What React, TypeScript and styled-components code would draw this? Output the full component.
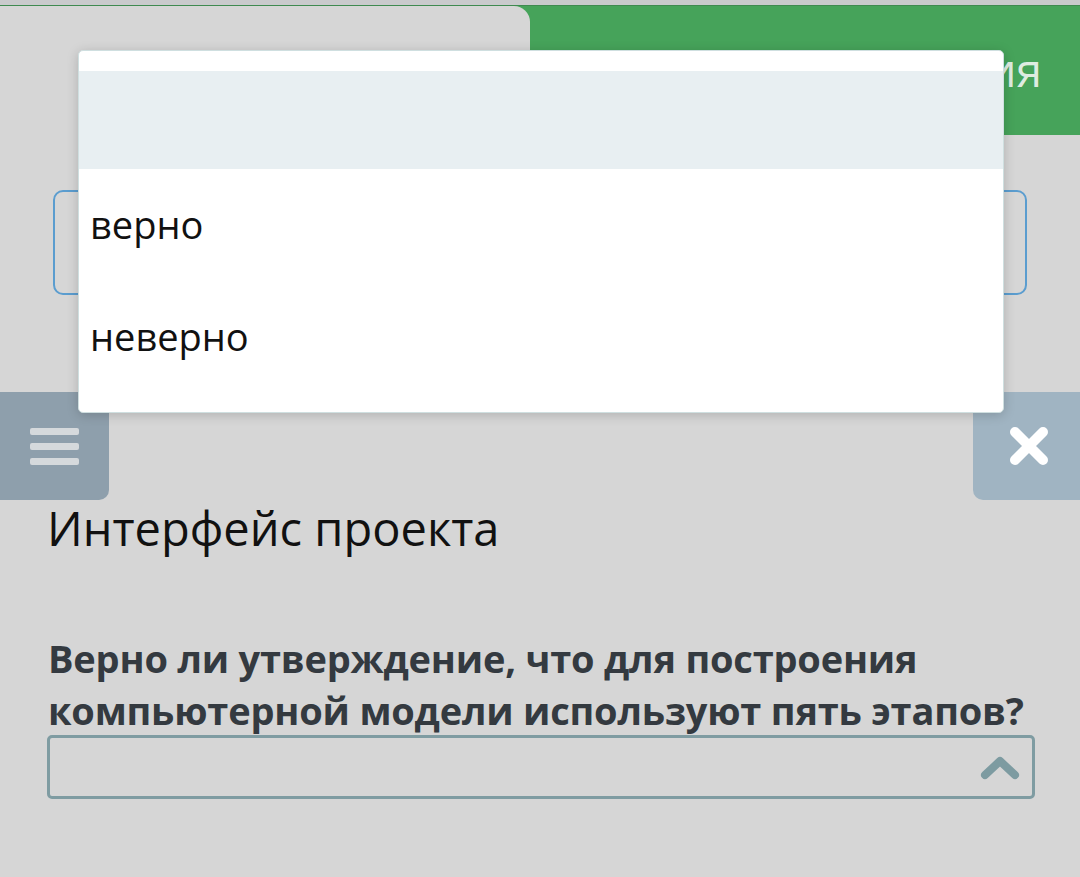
import React from "react";
import styled, { createGlobalStyle } from "styled-components";

const GlobalStyle = createGlobalStyle`
    body {
        margin: 0;
        background: #d6d6d6;
        font-family: "Open Sans", "Noto Sans", sans-serif;
    }
`;

const Page = styled.div`
    position: relative;
    width: 1080px;
    height: 877px;
    overflow: hidden;
    background: #d6d6d6;
`;

const TopStrip = styled.div`
    height: 5px;
    background: #c9cacc;
    border-bottom: 1px solid #3f8a50;
`;

const Header = styled.div`
    display: flex;
    height: 129px;
    background: linear-gradient(to right, transparent 510px, #46a35a 510px);
`;

const Tab = styled.div`
    width: 530px;
    background: #d6d6d6;
    border-top-right-radius: 16px;
`;

const GreenLabel = styled.div`
    flex: 1;
    display: flex;
    align-items: center;
    justify-content: flex-end;
    padding: 0 38px 4px 0;
    color: rgba(238, 244, 239, 0.92);
    font-size: 46px;
    white-space: nowrap;
`;

const InputRow = styled.div`
    padding: 55px 53px 0 53px;
`;

const TextInput = styled.div`
    height: 101px;
    border: 2px solid #5b9dcf;
    border-radius: 10px;
`;

const Toolbar = styled.div`
    display: flex;
    justify-content: space-between;
    margin-top: 97px;
    height: 108px;
`;

const MenuButton = styled.div`
    width: 109px;
    background: #8e9fac;
    border-radius: 0 10px 10px 0;
    display: flex;
    flex-direction: column;
    justify-content: center;
    gap: 8px;
    padding-left: 30px;
    box-sizing: border-box;
`;

const Bar = styled.span`
    display: block;
    width: 49px;
    height: 7px;
    border-radius: 2px;
    background: #d5d9dc;
`;

const CloseButton = styled.div`
    width: 107px;
    background: #a0b4c2;
    border-radius: 10px 0 0 10px;
    display: flex;
    align-items: center;
    justify-content: center;
    padding-left: 4px;
    box-sizing: border-box;
`;

const Content = styled.div`
    padding: 0 40px 0 47px;
`;

const Title = styled.h1`
    margin: 0;
    font-size: 47px;
    font-weight: 400;
    line-height: 56px;
    color: #111;
`;

const Question = styled.p`
    margin: 76px 0 0 1px;
    font-size: 38px;
    font-weight: 700;
    line-height: 52px;
    color: #343a40;
    letter-spacing: -0.2px;
`;

const SelectBox = styled.div`
    margin-top: -1px;
    width: 988px;
    height: 64px;
    box-sizing: border-box;
    border: 3px solid #7f9ca2;
    border-radius: 5px;
    display: flex;
    align-items: center;
    justify-content: flex-end;
    padding-right: 12px;
`;

const Dropdown = styled.div`
    position: absolute;
    top: 50px;
    left: 78px;
    width: 926px;
    padding: 20px 0;
    box-sizing: border-box;
    background: #fff;
    border: 1px solid #cfdfe0;
    border-radius: 5px;
    box-shadow: 0 2px 12px rgba(0, 0, 0, 0.18);
`;

const Option = styled.div<{ $active?: boolean; $h: number }>`
    height: ${(p) => p.$h}px;
    display: flex;
    align-items: center;
    padding-left: 11px;
    font-size: 38px;
    color: #111;
    background: ${(p) => (p.$active ? "#e8eff2" : "#fff")};
`;

const options = [
    { label: "", h: 98, active: true },
    { label: "верно", h: 110 },
    { label: "неверно", h: 113 },
];

const App = () => {
    return (
        <Page>
            <GlobalStyle />
            <TopStrip />
            <Header>
                <Tab />
                <GreenLabel>Все задания</GreenLabel>
            </Header>
            <InputRow>
                <TextInput />
            </InputRow>
            <Toolbar>
                <MenuButton>
                    <Bar />
                    <Bar />
                    <Bar />
                </MenuButton>
                <CloseButton>
                    <svg width="40" height="40" viewBox="0 0 40 40">
                        <path d="M6 6 L34 34 M34 6 L6 34" stroke="#fff" strokeWidth="10" strokeLinecap="round" />
                    </svg>
                </CloseButton>
            </Toolbar>
            <Content>
                <Title>Интерфейс проекта</Title>
                <Question>
                    Верно ли утверждение, что для построения компьютерной модели используют пять этапов?
                </Question>
                <SelectBox>
                    <svg width="40" height="28" viewBox="0 0 40 28">
                        <path d="M5 22 L20 8 L35 22" fill="none" stroke="#7d9ba1" strokeWidth="8" strokeLinejoin="round" strokeLinecap="round" />
                    </svg>
                </SelectBox>
            </Content>
            <Dropdown>
                {options.map((o, i) => (
                    <Option key={i} $active={o.active} $h={o.h}>
                        {o.label}
                    </Option>
                ))}
            </Dropdown>
        </Page>
    );
};

export default App;
